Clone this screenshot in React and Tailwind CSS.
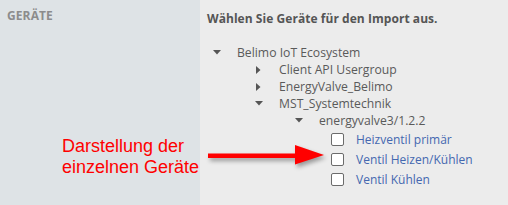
import React from 'react'

const TREE = [
  { level: 0, label: 'Belimo IoT Ecosystem', open: true },
  { level: 1, label: 'Client API Usergroup', open: false },
  { level: 1, label: 'EnergyValve_Belimo', open: false },
  { level: 1, label: 'MST_Systemtechnik', open: true },
  { level: 2, label: 'energyvalve3/1.2.2', open: true },
]

const DEVICES = ['Heizventil primär', 'Ventil Heizen/Kühlen', 'Ventil Kühlen']

const INDENT = ['pl-[13px]', 'pl-[55px]', 'pl-[95px]']

function Caret({ open }) {
  return open ? (
    <svg width="8" height="5" viewBox="0 0 8 5" className="shrink-0">
      <path d="M0 0 H8 L4 4.5 Z" fill="#555" />
    </svg>
  ) : (
    <svg width="5" height="8" viewBox="0 0 5 8" className="shrink-0 ml-[1px]">
      <path d="M0 0 V8 L4.5 4 Z" fill="#555" />
    </svg>
  )
}

export default function App() {
  return (
    <div className="relative w-[508px] h-[205px] flex overflow-hidden" style={{ fontFamily: '"Open Sans", sans-serif' }}>
      {/* Left label column */}
      <div className="w-[200px] shrink-0 bg-[#dee3e6] px-[7px] pt-[9px]">
        <p className="text-[12px] leading-[14px] font-bold text-[#8c8c8c] tracking-[0.1px]">GERÄTE</p>
      </div>

      {/* Content */}
      <div className="flex-1 bg-[#ececec] pt-[11px]">
        <p className="pl-[7px] text-[12px] leading-[16px] font-bold text-[#555] tracking-[0.05px]">Wählen Sie Geräte für den Import aus.</p>

        <div className="mt-[17px]">
          {TREE.map((n, i) => (
            <div key={i} className={`h-[17px] flex items-center ${INDENT[n.level]}`}>
              <div className="w-[24px] flex items-center">
                <Caret open={n.open} />
              </div>
              <span className="text-[12.2px] leading-[17px] text-[#5a5a5a]">{n.label}</span>
            </div>
          ))}
        </div>

        <div>
          {DEVICES.map((d, i) => (
            <div key={i} className="h-[20px] flex items-center pl-[131px]">
              <span className="w-[13px] h-[13px] rounded-[2px] border border-[#6b6b6b] bg-white shrink-0" />
              <span className="ml-[12px] text-[12px] leading-[17px] text-[#4468b0]">{d}</span>
            </div>
          ))}
        </div>
      </div>

      {/* Annotation */}
      <div
        className="absolute left-[62px] top-[136px] text-[18px] leading-[21px] text-[#ff0000]"
        style={{ fontFamily: '"Liberation Sans", Arial, sans-serif' }}
      >
        <p>Darstellung der</p>
        <p>einzelnen Geräte</p>
      </div>
      <svg
        className="absolute left-[200px] top-[140px]"
        width="130"
        height="30"
        viewBox="200 140 130 30"
        style={{ filter: 'drop-shadow(2px 3px 2px rgba(0,0,0,0.35))' }}
      >
        <rect x="208" y="153.5" width="90" height="4.5" fill="#ff0000" />
        <path d="M295 145 L324 155 L295 164.5 Z" fill="#ff0000" />
      </svg>
    </div>
  )
}
